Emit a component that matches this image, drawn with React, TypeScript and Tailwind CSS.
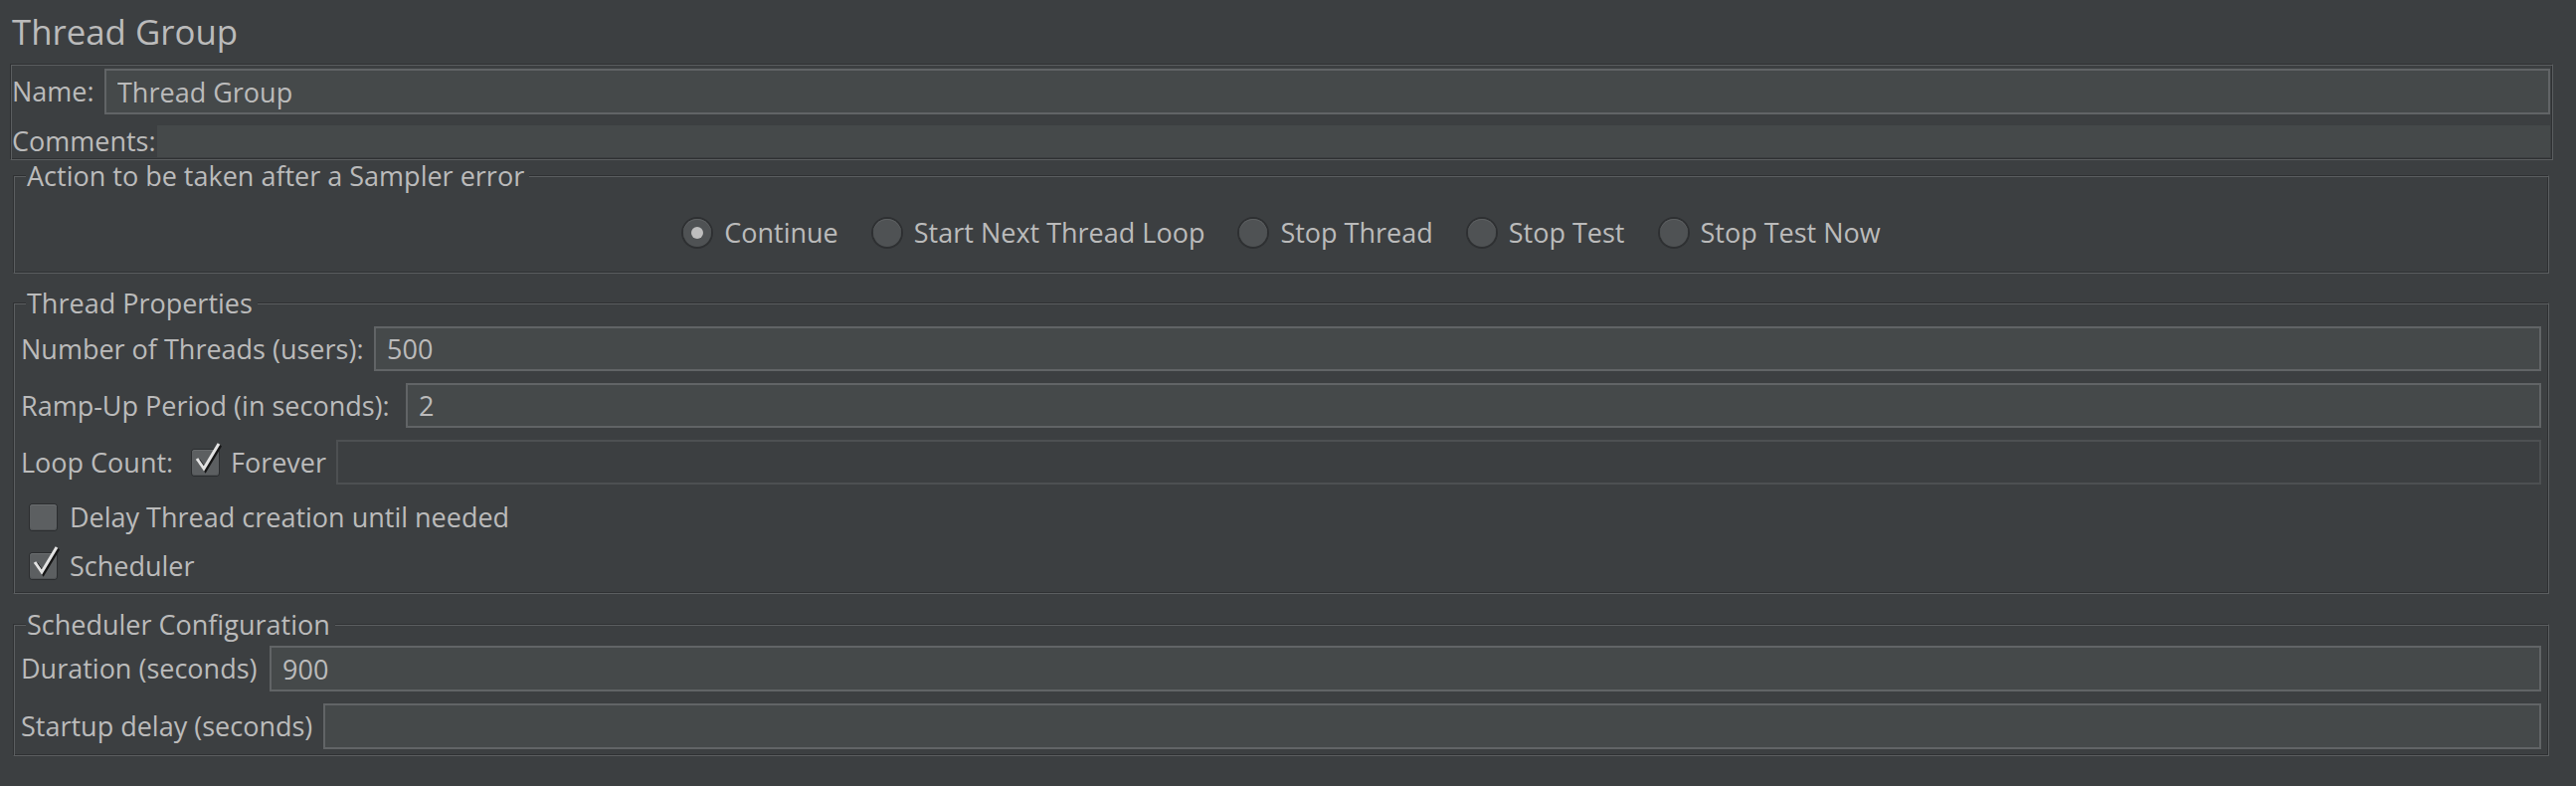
import React from 'react';

// etched (lowered) border like Swing's EtchedBorder in Darcula
const etched =
  'border border-t-[#2f3133] border-l-[#2f3133] border-b-[#5b5e60] border-r-[#5b5e60] shadow-[inset_1px_1px_0_#5b5e60,inset_-1px_-1px_0_#2f3133]';

const fieldCls =
  'flex-1 min-w-0 h-full bg-[#45494a] border-2 border-[#616466] pl-[11px] text-[#bbbbbb] outline-none';

const TitledBox: React.FC<{ title: string; className?: string; children: React.ReactNode }> = ({
  title,
  className = '',
  children,
}) => (
  <section className={`ml-[13px] w-[2550px] flex flex-col ${etched} ${className}`}>
    <div className="-mt-[15px] ml-[12px] h-[30px] leading-[30px] flex">
      <span className="bg-[#3c3f41] pl-[1px] pr-[5px]">{title}</span>
    </div>
    {children}
  </section>
);

const Radio: React.FC<{ label: string; checked?: boolean }> = ({ label, checked }) => (
  <label className="flex items-center gap-[11px]">
    <span className="w-[32px] h-[32px] rounded-full bg-[#2e3032] p-[2px] flex">
      <span className="flex-1 rounded-full bg-[#4f5254] shadow-[inset_0_1px_0_#5e6163] flex items-center justify-center">
        {checked && <span className="w-[12px] h-[12px] rounded-full bg-[#bebebe]" />}
      </span>
    </span>
    <span>{label}</span>
  </label>
);

const Checkbox: React.FC<{ checked?: boolean }> = ({ checked }) => (
  <span className="relative w-[29px] h-[28px] shrink-0 rounded-[4px] bg-[#2b2d2f] p-[1px] flex">
    <span className="flex-1 rounded-[3px] bg-[#5c5f61] shadow-[inset_0_1px_0_#696c6e,inset_0_-1px_0_#505355]" />
    {checked && (
      <svg className="absolute left-0 top-[-8px] overflow-visible" width="32" height="36" viewBox="0 0 32 36">
        <path d="M6 18 L13 28 L28 3" stroke="#151515" strokeWidth="3.5" fill="none" transform="translate(1.5 1.5)" />
        <path d="M6 18 L13 28 L28 3" stroke="#e2e2e2" strokeWidth="3" fill="none" />
      </svg>
    )}
  </span>
);

export default function App() {
  return (
    <div className="w-[2590px] h-[790px] overflow-hidden bg-[#3c3f41] text-[#bbbbbb] font-['Open_Sans',sans-serif] text-[27px] leading-[30px] flex flex-col pt-[12px]">
      <h1 className="pl-[12px] text-[34.8px] leading-[40px] font-normal">Thread Group</h1>

      {/* Name / Comments */}
      <div className={`mt-[12px] ml-[10px] w-[2557px] h-[97px] flex flex-col pt-[4px] pl-[1px] pr-[2px] ${etched}`}>
        <div className="flex items-center h-[46px]">
          <span className="w-[93px] shrink-0">Name:</span>
          <input readOnly defaultValue="Thread Group" className={fieldCls} />
        </div>
        <div className="mt-[11px] flex items-center h-[32px]">
          <span className="w-[146px] shrink-0">Comments:</span>
          <div className="flex-1 h-full bg-[#45494a]" />
        </div>
      </div>

      <TitledBox title="Action to be taken after a Sampler error" className="mt-[15px] h-[99px]">
        <div className="mt-[26px] h-[32px] flex items-center justify-center gap-[33px]">
          <Radio label="Continue" checked />
          <Radio label="Start Next Thread Loop" />
          <Radio label="Stop Thread" />
          <Radio label="Stop Test" />
          <Radio label="Stop Test Now" />
        </div>
      </TitledBox>

      <TitledBox title="Thread Properties" className="mt-[29px] h-[293px]">
        <div className="flex flex-col pl-[7px] pr-[7px]">
          <div className="mt-[8px] h-[45px] flex items-center">
            <span className="w-[355px] shrink-0">Number of Threads (users):</span>
            <input readOnly defaultValue="500" className={fieldCls} />
          </div>
          <div className="mt-[12px] h-[45px] flex items-center">
            <span className="w-[387px] shrink-0">Ramp-Up Period (in seconds):</span>
            <input readOnly defaultValue="2" className={fieldCls} />
          </div>
          <div className="mt-[12px] h-[45px] flex items-center">
            <span className="w-[171px] shrink-0">Loop Count:</span>
            <Checkbox checked />
            <span className="ml-[11px] w-[106px] shrink-0">Forever</span>
            <div className="flex-1 h-full border-2 border-[#4d5052]" />
          </div>
          <div className="mt-[18px] h-[30px] pl-[8px] flex items-center gap-[12px]">
            <Checkbox />
            <span>Delay Thread creation until needed</span>
          </div>
          <div className="mt-[19px] h-[30px] pl-[8px] flex items-center gap-[12px]">
            <Checkbox checked />
            <span>Scheduler</span>
          </div>
        </div>
      </TitledBox>

      <TitledBox title="Scheduler Configuration" className="mt-[30px] h-[133px]">
        <div className="flex flex-col pl-[7px] pr-[7px]">
          <div className="mt-[6px] h-[46px] flex items-center">
            <span className="w-[250px] shrink-0">Duration (seconds)</span>
            <input readOnly defaultValue="900" className={fieldCls} />
          </div>
          <div className="mt-[12px] h-[46px] flex items-center">
            <span className="w-[304px] shrink-0">Startup delay (seconds)</span>
            <input readOnly defaultValue="" className={fieldCls} />
          </div>
        </div>
      </TitledBox>
    </div>
  );
}
